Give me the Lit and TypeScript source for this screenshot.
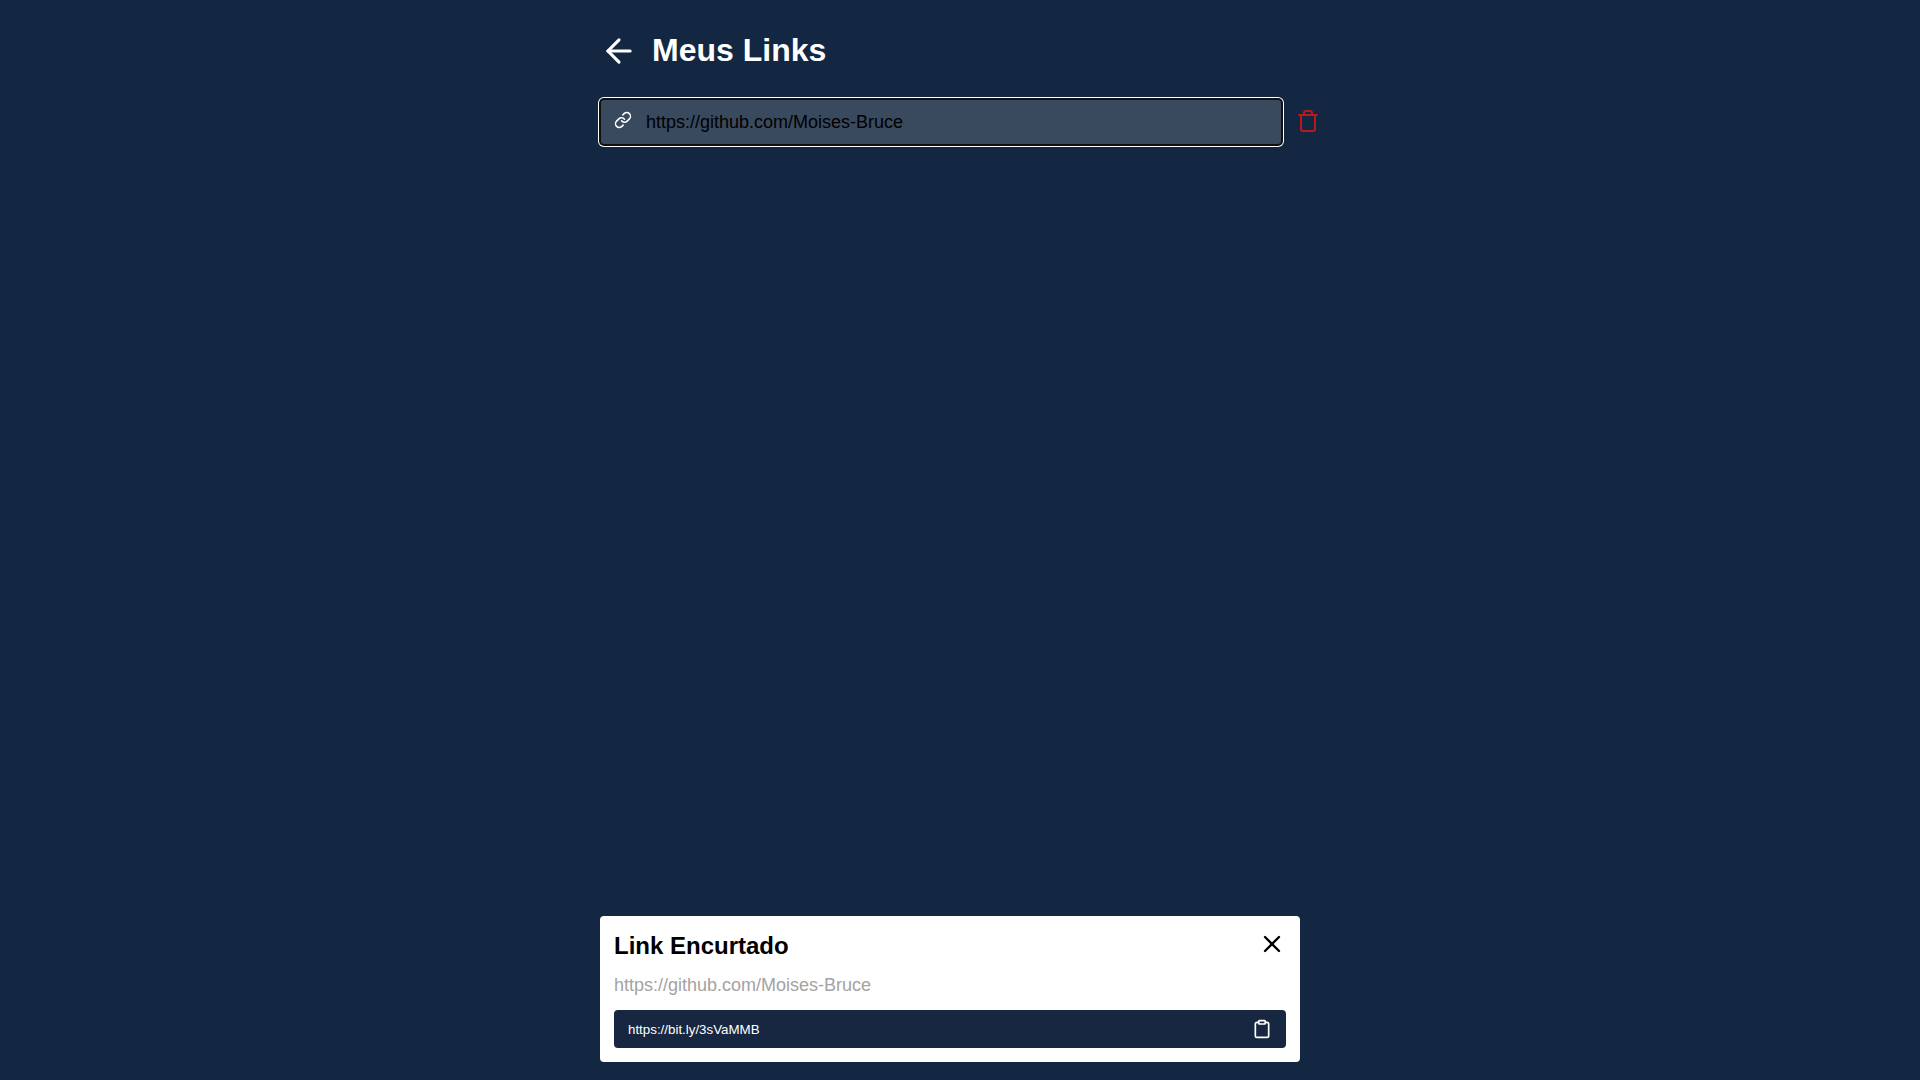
import { LitElement, html, css, svg } from "lit";
import { customElement } from "lit/decorators.js";

const icon = (size: number, width: number, body: unknown) => html`<svg
  width=${size} height=${size} viewBox="0 0 24 24" fill="none" stroke="currentColor"
  stroke-width=${width} stroke-linecap="round" stroke-linejoin="round">${body}</svg>`;

const arrowLeft = svg`<line x1="19" y1="12" x2="5" y2="12"/><polyline points="12 19 5 12 12 5"/>`;
const link = svg`<path d="M10 13a5 5 0 0 0 7.54.54l3-3a5 5 0 0 0-7.07-7.07l-1.72 1.71"/><path d="M14 11a5 5 0 0 0-7.54-.54l-3 3a5 5 0 0 0 7.07 7.07l1.71-1.71"/>`;
const trash = svg`<polyline points="3 6 5 6 21 6"/><path d="M19 6v14a2 2 0 0 1-2 2H7a2 2 0 0 1-2-2V6m3 0V4a2 2 0 0 1 2-2h4a2 2 0 0 1 2 2v2"/>`;
const cross = svg`<line x1="18" y1="6" x2="6" y2="18"/><line x1="6" y1="6" x2="18" y2="18"/>`;
const clipboard = svg`<path d="M16 4h2a2 2 0 0 1 2 2v14a2 2 0 0 1-2 2H6a2 2 0 0 1-2-2V6a2 2 0 0 1 2-2h2"/><rect x="8" y="2" width="8" height="4" rx="1" ry="1"/>`;

@customElement("app-root")
export class AppRoot extends LitElement {
  static styles = css`
    :host {
      display: flex;
      flex-direction: column;
      align-items: center;
      justify-content: space-between;
      box-sizing: border-box;
      height: 100vh;
      padding: 32px 0 18px;
      background: #132742;
      color: #fff;
      font-family: "Liberation Sans", Arial, sans-serif;
    }
    svg { display: block; flex: none; }
    h1, h2, p { margin: 0; }
    .links { width: 720px; }
    .header { display: flex; align-items: center; gap: 14px; height: 38px; }
    h1 { font-size: 32px; line-height: 36px; margin-top: -2px; }
    .row { display: flex; align-items: center; margin-top: 28px; }
    .item {
      display: flex;
      align-items: center;
      box-sizing: border-box;
      width: 680px;
      height: 44px;
      margin: 2px 0 0 1px;
      padding: 0 13px;
      gap: 14px;
      border: 0;
      border-radius: 3px;
      background: #39495e;
      box-shadow: 0 0 0 2px #101010, 0 0 0 3px #fff;
      color: #000;
      font: 18px "Liberation Sans", Arial, sans-serif;
    }
    .item svg { color: #fff; margin-top: -5px; }
    .remove { padding: 0; border: 0; background: none; color: #b81a1a; margin-left: 15px; }
    .modal {
      box-sizing: border-box;
      width: 700px;
      height: 146px;
      margin-right: 20px;
      padding: 14px;
      border-radius: 4px;
      background: #fff;
      color: #000;
    }
    .title { display: flex; justify-content: space-between; height: 32px; align-items: center; }
    h2 { font-size: 24px; line-height: 28px; }
    .close { padding: 0; border: 0; background: none; color: #000; margin-top: -4px; }
    .long { color: #a3a3a3; font-size: 18px; line-height: 20px; margin: 13px 0 15px; }
    .short {
      display: flex;
      align-items: center;
      justify-content: space-between;
      box-sizing: border-box;
      height: 38px;
      padding: 0 14px;
      border-radius: 4px;
      background: #172742;
      color: #fff;
      font: 13.333px "Liberation Sans", Arial, sans-serif;
    }
  `;

  render() {
    return html`
      <div class="links">
        <div class="header">${icon(38, 2, arrowLeft)}<h1>Meus Links</h1></div>
        <div class="row">
          <button class="item">${icon(18, 2, link)}<span>https://github.com/Moises-Bruce</span></button>
          <button class="remove">${icon(24, 2, trash)}</button>
        </div>
      </div>
      <div class="modal">
        <div class="title"><h2>Link Encurtado</h2><button class="close">${icon(28, 2, cross)}</button></div>
        <p class="long">https://github.com/Moises-Bruce</p>
        <div class="short"><span>https://bit.ly/3sVaMMB</span>${icon(20, 2, clipboard)}</div>
      </div>
    `;
  }
}
